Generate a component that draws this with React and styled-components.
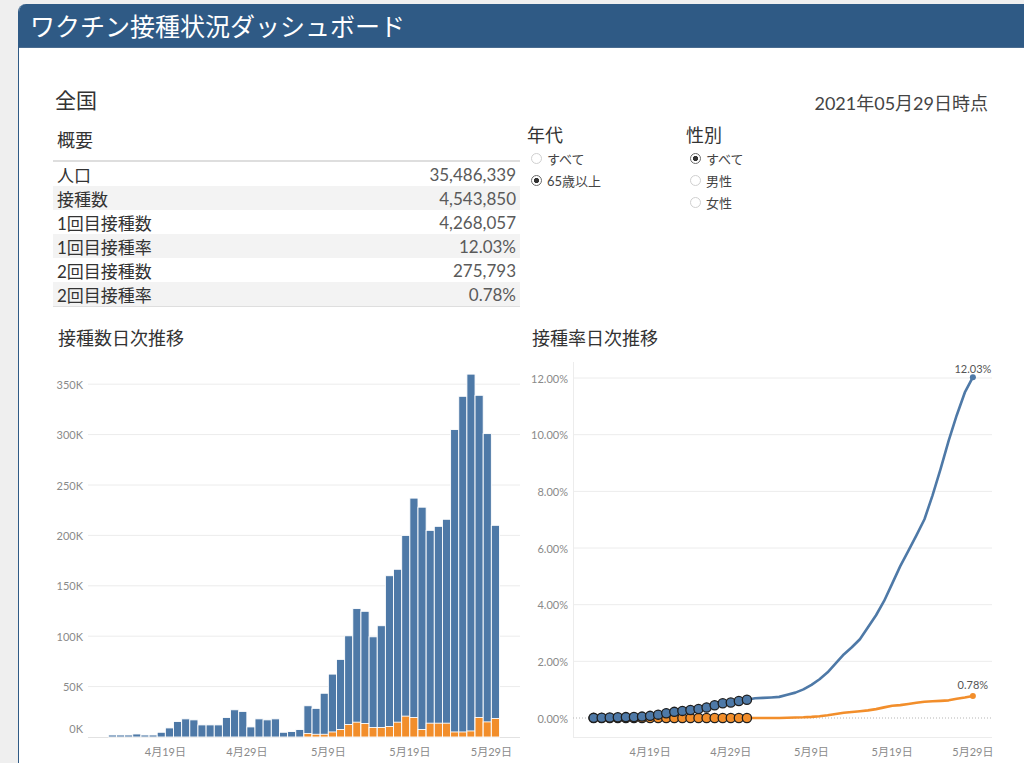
import React from 'react';
import styled, { createGlobalStyle } from 'styled-components';

const FONT = `Lato, "Noto Sans CJK JP", sans-serif`;
const BLUE = '#4e79a7';
const ORANGE = '#f28e2b';

// daily doses in thousands, 4/12 .. 5/29
const totals = [
  2, 2, 2, 3, 2, 2, 4.7, 9, 15.4, 18, 17, 12, 12, 12, 19.4, 27, 25.4, 10, 18, 17,
  18, 4.7, 5.4, 7.4, 31, 28.4, 43.4, 62.4, 77, 100.4, 127.4, 124.7, 99.4, 110.4, 160, 166.4,
  200, 237, 228, 205, 209, 216, 305, 338, 360, 339, 301, 210
];
const second = [
  ...Array(24).fill(0),
  3.4, 2.7, 2.7, 5, 7.4, 12.4, 14.7, 13.4, 9.4, 9.4, 10.4, 14.7,
  20.7, 19.4, 7.4, 13.7, 13.7, 13.7, 5, 5, 6, 19.4, 15, 18.4
];

const cumulative = (arr, finalRate) => {
  let sum = 0;
  const out = arr.map(v => (sum += v));
  return out.map(v => (v / sum) * finalRate);
};
const firstRate = cumulative(totals.map((t, i) => t - second[i]), 12.03);
const secondRate = cumulative(second, 0.78);

const summary = [
  ['人口', '35,486,339'],
  ['接種数', '4,543,850'],
  ['1回目接種数', '4,268,057'],
  ['1回目接種率', '12.03%'],
  ['2回目接種数', '275,793'],
  ['2回目接種率', '0.78%']
];

const tickDays = [
  [7, '4月19日'],
  [17, '4月29日'],
  [27, '5月9日'],
  [37, '5月19日'],
  [47, '5月29日']
];

const GlobalStyle = createGlobalStyle`
  html, body {
    margin: 0;
    height: 100%;
    overflow: hidden;
    background: #efefef;
  }
  body {
    font-family: ${FONT};
  }
`;

const Card = styled.div`
  margin: 4px 0 0 18px;
  height: 759px;
  background: #fff;
  border-left: 1px solid #2f5a85;
  border-top-left-radius: 8px;
  overflow: hidden;
`;

const Header = styled.header`
  height: 43px;
  padding-left: 11px;
  border-bottom: 1px solid #4a6c90;
  background: #2f5a85;
  color: #fff;
  font-family: "Noto Sans CJK JP", sans-serif;
  font-size: 25px;
  line-height: 43px;
`;

const Body = styled.main`
  padding: 38px 36px 0 34px;
`;

const TopRow = styled.div`
  display: flex;
  justify-content: space-between;
  align-items: flex-start;
  height: 28px;
`;

const Region = styled.h1`
  margin: 0 0 0 2px;
  font-size: 21px;
  font-weight: 400;
  line-height: 28px;
  color: #333;
`;

const AsOf = styled.div`
  margin-top: 3px;
  font-size: 18px;
  line-height: 28px;
  color: #444;
`;

const SummarySection = styled.section`
  display: grid;
  grid-template-columns: 467px 152px 152px;
  column-gap: 7px;
  align-items: start;
`;

const SectionTitle = styled.h2`
  margin: 14px 0 0;
  padding-left: 4px;
  font-size: 18px;
  font-weight: 400;
  line-height: 24px;
  color: #333;
`;

const Table = styled.div`
  margin-top: 8px;
  border-top: 2px solid #dedede;
  border-bottom: 1px solid #dedede;
`;

const Row = styled.div`
  display: flex;
  justify-content: space-between;
  align-items: center;
  height: 24px;
  padding: 0 4px 0 4px;
  font-size: 17px;
  background: ${p => (p.$shaded ? '#f3f3f3' : 'transparent')};
`;

const RowLabel = styled.span`
  color: #333;
`;

const RowValue = styled.span`
  color: #5a5a5a;
`;

const FilterGroup = styled.div`
  margin-top: 9px;
`;

const FilterTitle = styled.div`
  font-size: 18px;
  line-height: 24px;
  color: #333;
`;

const RadioItem = styled.label`
  display: flex;
  align-items: center;
  gap: 5px;
  height: 22px;
  padding-left: 4px;
  font-size: 13px;
  color: #444;
`;

const RadioMark = styled.span`
  width: 11px;
  height: 11px;
  box-sizing: border-box;
  border-radius: 50%;
  border: 1px solid ${p => (p.$checked ? '#6a6a6a' : '#d0d0d0')};
  background: ${p => (p.$checked ? 'radial-gradient(circle, #333 0 2.4px, #fff 2.9px)' : '#fff')};
`;

const ChartsRow = styled.section`
  display: grid;
  grid-template-columns: 470px 495px;
  margin-top: 9px;
`;

const ChartTitle = styled.h2`
  margin: 10px 0 2px;
  padding-left: ${p => p.$indent}px;
  font-size: 18px;
  font-weight: 400;
  line-height: 24px;
  color: #333;
`;

const ChartSvg = styled.svg`
  display: block;
  overflow: visible;
`;

const AxisText = styled.text`
  font-family: ${FONT};
  font-size: 11px;
  fill: #8a8a8a;
  dominant-baseline: central;
`;

const MarkLabel = styled.text`
  font-family: ${FONT};
  font-size: 11px;
  fill: #555;
  text-anchor: middle;
`;

function Filter({ title, options, selected }) {
  return (
    <FilterGroup>
      <FilterTitle>{title}</FilterTitle>
      {options.map(o => (
        <RadioItem key={o}>
          <RadioMark $checked={o === selected} />
          {o}
        </RadioItem>
      ))}
    </FilterGroup>
  );
}

// Bar chart: page coordinates are used as the viewBox
function DosesChart() {
  const base = 737;
  const k = 1.008;
  const barX = i => 108.3 + i * 8.15;
  const grid = [50, 100, 150, 200, 250, 300, 350];
  return (
    <ChartSvg width="470" height="411" viewBox="53 352 470 411">
      {grid.map(g => (
        <line key={g} x1="88" x2="520" y1={base - g * k} y2={base - g * k} stroke="#ececec" />
      ))}
      <line x1="88" x2="520" y1={base + 0.5} y2={base + 0.5} stroke="#e2e2e2" />
      {grid.map(g => (
        <AxisText key={g} x="83" y={base - g * k} textAnchor="end">{`${g}K`}</AxisText>
      ))}
      <AxisText x="83" y="728" textAnchor="end">0K</AxisText>
      {totals.map((t, i) => (
        <g key={i}>
          <rect x={barX(i)} y={base - t * k} width="8.15" height={t * k} fill={BLUE} stroke="#fff" strokeWidth="0.9" />
          {second[i] > 0 && (
            <rect x={barX(i)} y={base - second[i] * k} width="8.15" height={second[i] * k} fill={ORANGE} stroke="#fff" strokeWidth="0.9" />
          )}
        </g>
      ))}
      {tickDays.map(([i, label]) => (
        <AxisText key={label} x={barX(i)} y="751" textAnchor="middle">{label}</AxisText>
      ))}
    </ChartSvg>
  );
}

function RateChart() {
  const zero = 718;
  const k = 28.33;
  const px = i => 593.6 + i * 8.07;
  const py = v => zero - v * k;
  const pts = arr => arr.map((v, i) => `${px(i)},${py(v)}`).join(' ');
  const grid = [2, 4, 6, 8, 10, 12];
  const last = totals.length - 1;
  const dots = firstRate.slice(0, 20);
  return (
    <ChartSvg width="495" height="411" viewBox="523 352 495 411">
      {grid.map(g => (
        <line key={g} x1="573" x2="992" y1={py(g)} y2={py(g)} stroke="#ececec" />
      ))}
      <line x1="573.5" x2="573.5" y1="362" y2="737" stroke="#ececec" />
      <line x1="573" x2="992" y1="737.5" y2="737.5" stroke="#ececec" />
      <line x1="573" x2="992" y1={zero} y2={zero} stroke="#b5b5b5" strokeDasharray="1 2" />
      {[0, ...grid].map(g => (
        <AxisText key={g} x="568" y={py(g)} textAnchor="end">{`${g.toFixed(2)}%`}</AxisText>
      ))}
      <polyline points={pts(secondRate)} fill="none" stroke={ORANGE} strokeWidth="2.6" strokeLinejoin="round" />
      <polyline points={pts(firstRate)} fill="none" stroke={BLUE} strokeWidth="2.6" strokeLinejoin="round" />
      {dots.map((_, i) => (
        <circle key={`o${i}`} cx={px(i)} cy={py(secondRate[i])} r="4.6" fill={ORANGE} stroke="#1e1e1e" strokeWidth="1.3" />
      ))}
      {dots.map((v, i) => (
        <circle key={`b${i}`} cx={px(i)} cy={py(v)} r="4.6" fill={BLUE} stroke="#1e1e1e" strokeWidth="1.3" />
      ))}
      <circle cx={px(last)} cy={py(firstRate[last])} r="3" fill={BLUE} />
      <circle cx={px(last)} cy={py(secondRate[last])} r="3" fill={ORANGE} />
      <MarkLabel x={px(last)} y="373">12.03%</MarkLabel>
      <MarkLabel x={px(last)} y="689">0.78%</MarkLabel>
      {tickDays.map(([i, label]) => (
        <AxisText key={label} x={px(i)} y="751" textAnchor="middle">{label}</AxisText>
      ))}
    </ChartSvg>
  );
}

export default function App() {
  return (
    <>
      <GlobalStyle />
      <Card>
        <Header>ワクチン接種状況ダッシュボード</Header>
        <Body>
          <TopRow>
            <Region>全国</Region>
            <AsOf>2021年05月29日時点</AsOf>
          </TopRow>
          <SummarySection>
            <div>
              <SectionTitle>概要</SectionTitle>
              <Table>
                {summary.map(([label, value], i) => (
                  <Row key={label} $shaded={i % 2 === 1}>
                    <RowLabel>{label}</RowLabel>
                    <RowValue>{value}</RowValue>
                  </Row>
                ))}
              </Table>
            </div>
            <Filter title="年代" options={['すべて', '65歳以上']} selected="65歳以上" />
            <Filter title="性別" options={['すべて', '男性', '女性']} selected="すべて" />
          </SummarySection>
          <ChartsRow>
            <div>
              <ChartTitle $indent={5}>接種数日次推移</ChartTitle>
              <DosesChart />
            </div>
            <div>
              <ChartTitle $indent={9}>接種率日次推移</ChartTitle>
              <RateChart />
            </div>
          </ChartsRow>
        </Body>
      </Card>
    </>
  );
}
